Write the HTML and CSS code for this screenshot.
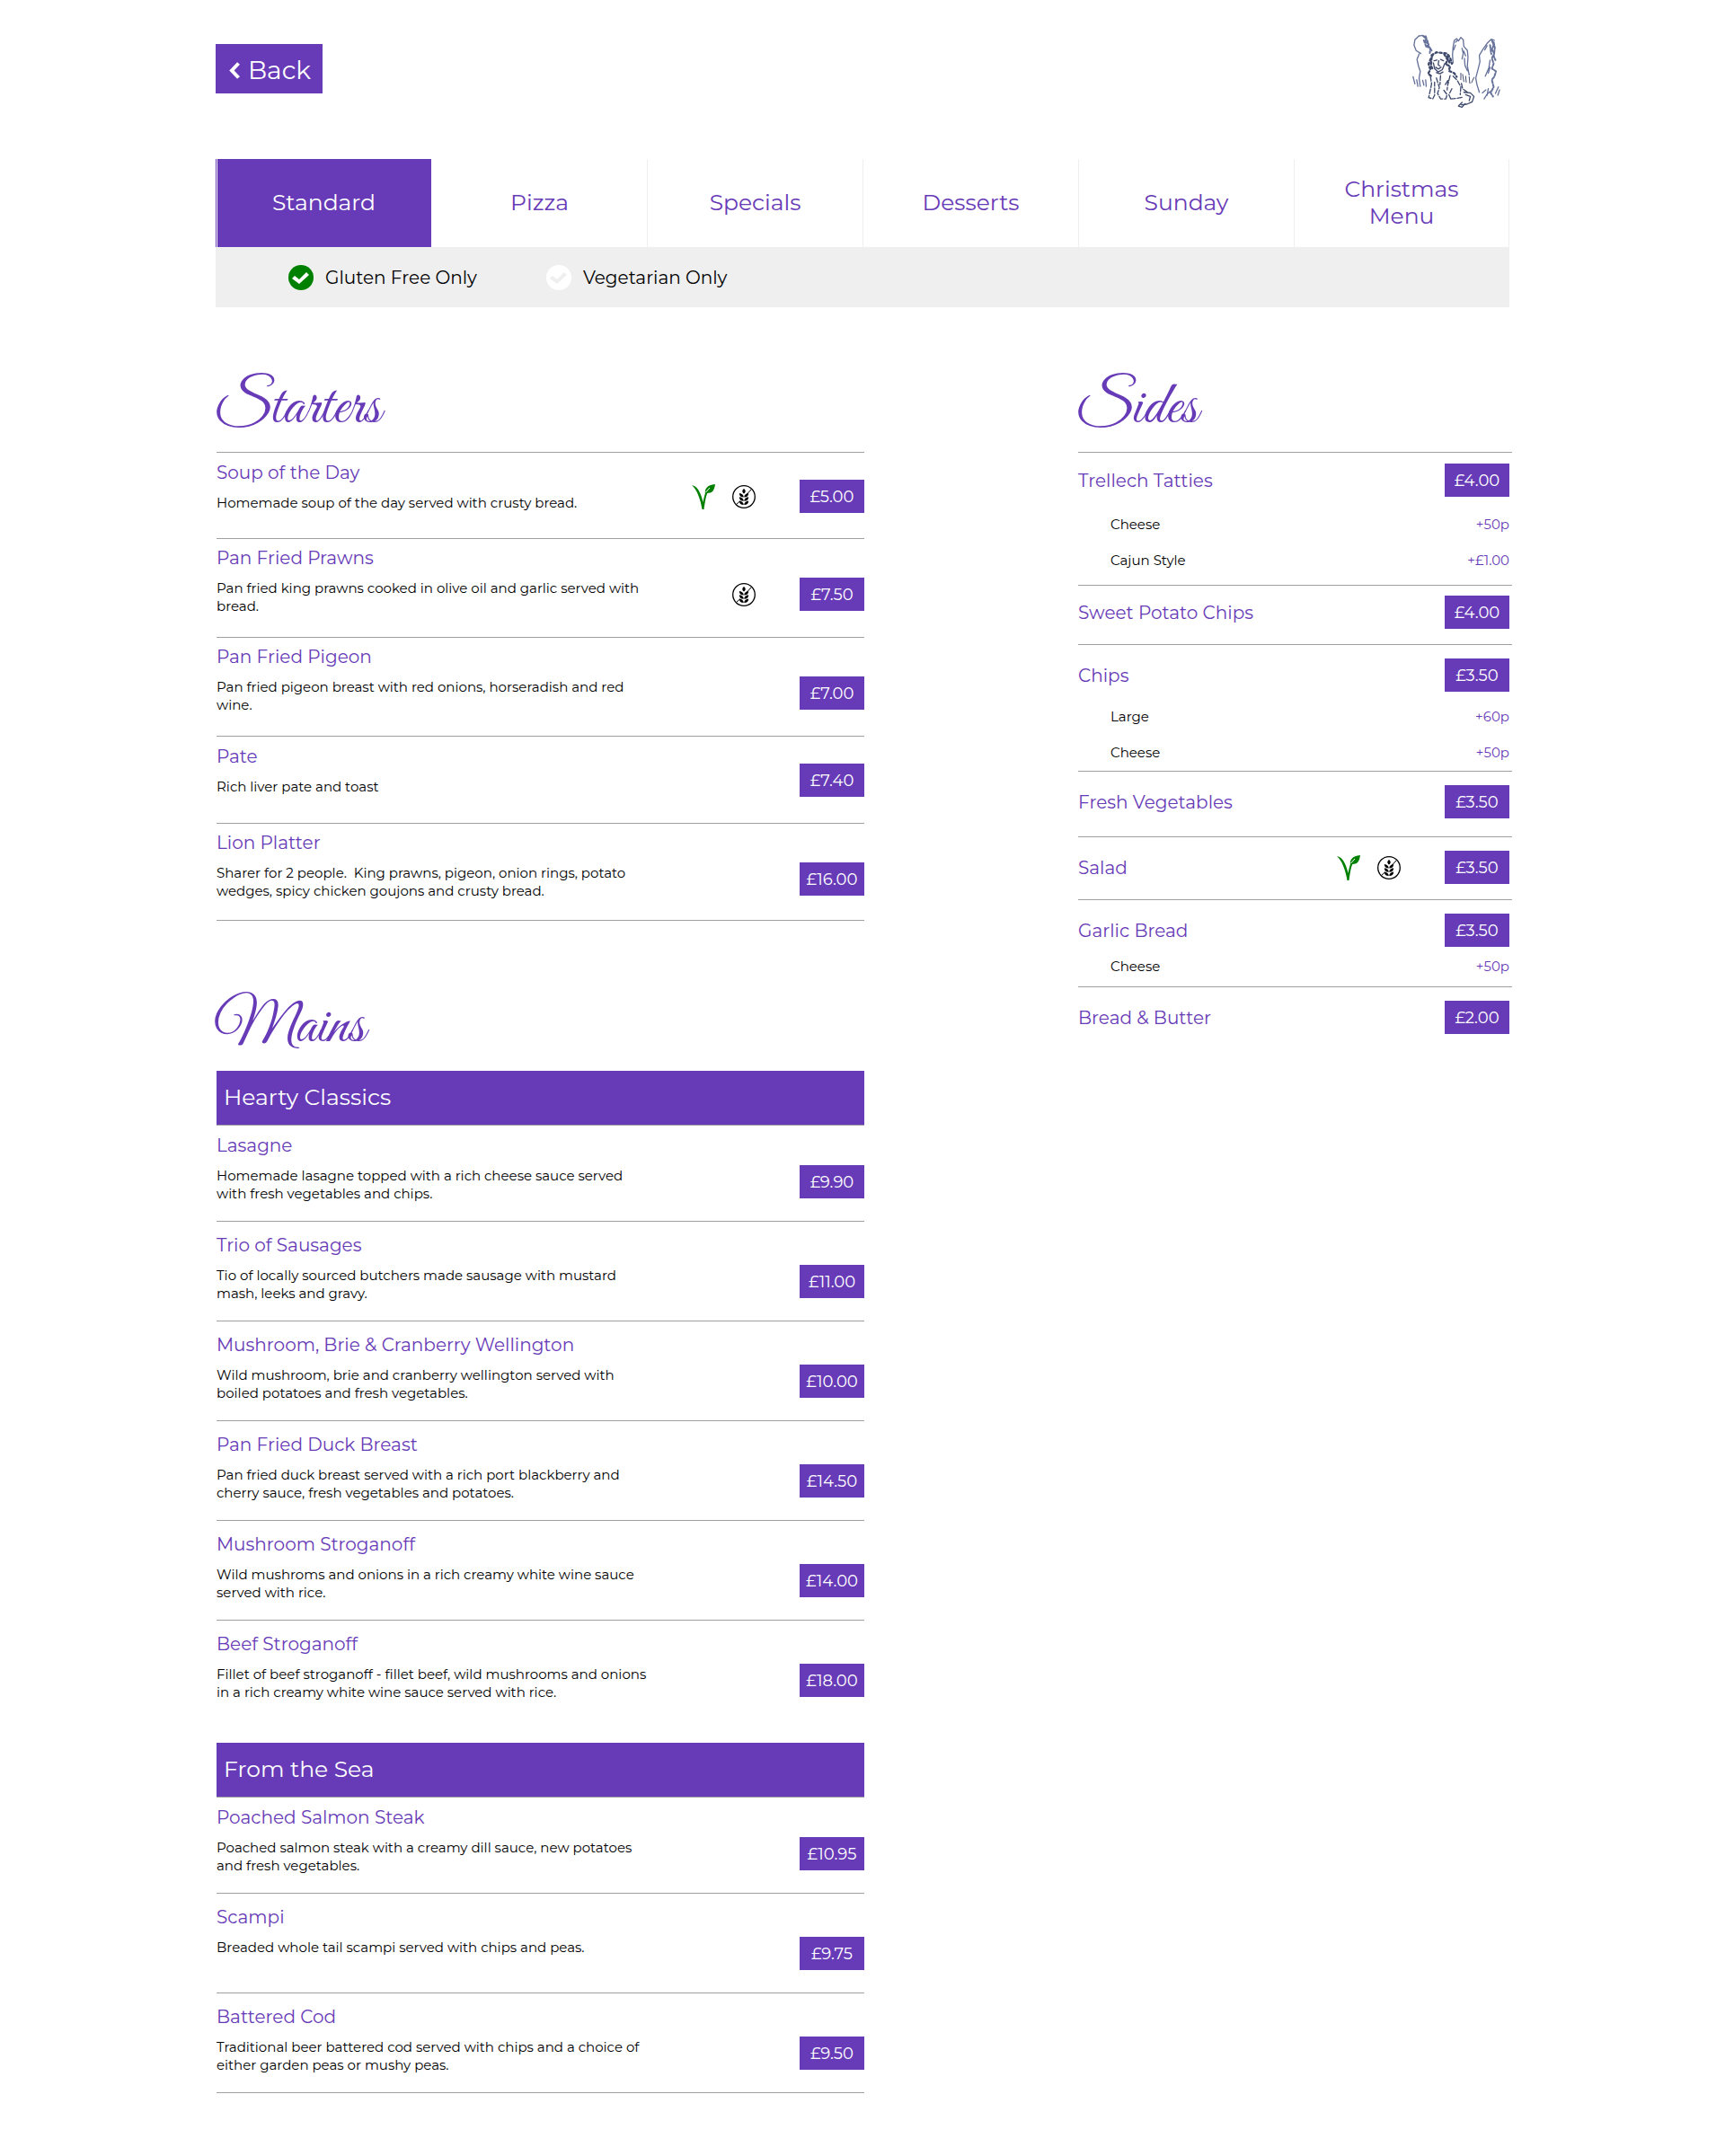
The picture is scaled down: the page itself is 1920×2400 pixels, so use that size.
FILE: index.html
```html
<!DOCTYPE html>
<html lang="en">
<head>
<meta charset="utf-8">
<meta name="viewport" content="width=device-width, initial-scale=1">
<title>Menu</title>
<link rel="stylesheet" href="styles.css">
</head>
<body>
<svg class="sprite" aria-hidden="true">
  <symbol id="veg" viewBox="0 0 26 28">
    <path d="M0 1C6 2 10 9 12.500 20C14 13 15 8 18 5L20 6C16 10 15 18 13.500 28H11.500C10 18 6 6 0 1Z" fill="#008000"/>
    <path d="M26 0C25 7 23 10 17 10L15 11C14 5 17 1 26 0Z" fill="#008000"/>
    <path d="M15.500 9L20 4" stroke="#fff" stroke-width="1"/>
  </symbol>
  <symbol id="gf" viewBox="0 0 26 26">
    <circle cx="13" cy="13" r="12.300" fill="none" stroke="#000" stroke-width="1.300"/>
    <path d="M4.500 21.500L8.500 18M16 10.500L21.500 4.500" stroke="#000" stroke-width="1"/>
    <path d="M13 4C15.500 6 15 8 13 9.500C11 8 10.500 6 13 4Z"/>
    <path d="M7.800 9C11 9.500 12.600 11 12.800 13.500C9.500 13.500 8 12 7.800 9ZM18.200 9C15 9.500 13.400 11 13.200 13.500C16.500 13.500 18 12 18.200 9Z"/>
    <path d="M7.800 13.200C11 13.700 12.600 15.200 12.800 17.700C9.500 17.700 8 16.200 7.800 13.200ZM18.200 13.200C15 13.700 13.400 15.200 13.200 17.700C16.500 17.700 18 16.200 18.200 13.200Z"/>
    <path d="M7.800 17.500C11 18 12.600 19.500 12.800 22C9.500 22 8 20.500 7.800 17.500ZM18.200 17.500C15 18 13.400 19.500 13.200 22C16.500 22 18 20.500 18.200 17.500Z"/>
  </symbol>
</svg>

<div class="page">
  <header class="top">
    <button class="back" type="button">
      <svg class="chevron" viewBox="0 0 12 19" aria-hidden="true"><path d="M10.500 1.500L3 9.500L10.500 17.500" fill="none" stroke="#fff" stroke-width="4"/></svg>
      Back
    </button>
    <svg class="logo" viewBox="90 50 300 250" role="img" aria-label="Lion and standing stones">
      <g fill="none" stroke="#66729a" stroke-width="4" stroke-linecap="round" stroke-linejoin="round">
        <path d="M118 58L104 72L101 90L108 108L124 118M116 60L128 57L140 62M118 120L111 138L116 160L122 178L118 200L122 228M110 206L114 228M98 196L104 220M130 208L134 224M140 206L142 228"/>
        <path d="M132 60L142 68L138 78L148 84L146 96L156 100L154 116M140 60L150 88M134 74L144 100M148 90L160 108" stroke-width="6" stroke-dasharray="8 6"/>
        <path d="M236 74L232 96L230 124L232 150M236 74L244 68L250 76L258 64L266 72L268 94L280 108L282 130L280 160L286 190M262 100L266 118L262 136M268 110L274 126M270 134L272 158L280 176M234 106L240 90M240 80L246 74"/>
        <path d="M358 72L346 84L332 104L320 124L322 146L316 170L308 200L312 222L320 248M360 70L370 74M346 92L338 106M356 140L352 166L340 194M356 164L350 184"/>
        <path d="M362 74L368 90L362 104L370 118L362 134L368 152L362 168L376 178L370 196L362 206L368 230L358 250L366 262M368 80L372 100L368 126L374 140M356 90L360 120" stroke-width="6" stroke-dasharray="9 5"/>
        <path d="M336 270L346 254L358 244M346 258L350 236M374 252L384 230M382 258L388 240M330 250L342 240"/>
      </g>
      <g fill="none" stroke="#3f4a6c" stroke-width="4" stroke-linecap="round" stroke-linejoin="round">
        <path d="M160 124L176 114L196 116L212 118L222 132L228 152M164 122L156 138L150 154L156 172L148 186L160 194M202 120L214 140L206 154L222 160L218 176L236 184L244 196M212 128L220 148M160 132L158 160L166 174" stroke-width="7" stroke-dasharray="7 8"/>
        <path d="M168 142L178 140M190 138L200 142M184 142L182 156L188 160M174 164L182 170L192 164M166 150L170 168L182 180L196 172L204 152M176 182L188 186L198 180"/>
        <path d="M156 194L160 220L154 248L150 266L164 270L170 258L170 214M176 200L186 232L180 252L190 270L208 270L212 256L200 240M190 192L188 222M206 222L216 206L212 240M222 192L214 224M232 194L246 208L258 230L256 256M228 236L218 256L224 270M224 270L246 268L266 264M260 218L264 236L280 248" stroke-dasharray="16 6"/>
        <path d="M268 248L290 250L302 262L296 280L278 288L260 290M274 256L290 262L286 276M262 282L250 294L262 298L272 286"/>
        <path d="M258 206L258 184M268 212L264 188M276 214L274 194M288 218L286 196M294 216L302 198" stroke-width="3"/>
      </g>
    </svg>
  </header>

  <nav class="tabs" aria-label="Menus">
    <a class="tab tab--active" href="#standard" aria-current="page">Standard</a>
    <a class="tab" href="#pizza">Pizza</a>
    <a class="tab" href="#specials">Specials</a>
    <a class="tab" href="#desserts">Desserts</a>
    <a class="tab" href="#sunday">Sunday</a>
    <a class="tab" href="#christmas">Christmas Menu</a>
  </nav>
  <form class="filters">
    <label class="filter"><input class="check" type="checkbox" checked>Gluten Free Only</label>
    <label class="filter"><input class="check" type="checkbox">Vegetarian Only</label>
  </form>

  <main class="columns" id="standard">
    <div class="dishes">
      <section>
        <h2 class="heading">Starters</h2>
        <ul class="list list--starters">
          <li class="dish dish--short">
            <div class="info"><h3 class="name">Soup of the Day</h3><p class="desc">Homemade soup of the day served with crusty bread.</p></div>
            <div class="side"><svg class="veg" role="img" aria-label="Vegetarian"><use href="#veg"/></svg><svg class="gf" role="img" aria-label="Gluten free"><use href="#gf"/></svg><span class="price">£5.00</span></div>
          </li>
          <li class="dish">
            <div class="info"><h3 class="name">Pan Fried Prawns</h3><p class="desc">Pan fried king prawns cooked in olive oil and garlic served with<br>bread.</p></div>
            <div class="side"><svg class="gf" role="img" aria-label="Gluten free"><use href="#gf"/></svg><span class="price">£7.50</span></div>
          </li>
          <li class="dish">
            <div class="info"><h3 class="name">Pan Fried Pigeon</h3><p class="desc">Pan fried pigeon breast with red onions, horseradish and red<br>wine.</p></div>
            <div class="side"><span class="price">£7.00</span></div>
          </li>
          <li class="dish dish--short">
            <div class="info"><h3 class="name">Pate</h3><p class="desc">Rich liver pate and toast</p></div>
            <div class="side"><span class="price">£7.40</span></div>
          </li>
          <li class="dish">
            <div class="info"><h3 class="name">Lion Platter</h3><p class="desc">Sharer for 2 people.&nbsp; King prawns, pigeon, onion rings, potato<br>wedges, spicy chicken goujons and crusty bread.</p></div>
            <div class="side"><span class="price">£16.00</span></div>
          </li>
        </ul>
      </section>

      <section class="mains">
        <h2 class="heading">Mains</h2>
        <h3 class="band">Hearty Classics</h3>
        <ul class="list list--open">
          <li class="dish">
            <div class="info"><h4 class="name">Lasagne</h4><p class="desc">Homemade lasagne topped with a rich cheese sauce served<br>with fresh vegetables and chips.</p></div>
            <div class="side"><span class="price">£9.90</span></div>
          </li>
          <li class="dish">
            <div class="info"><h4 class="name">Trio of Sausages</h4><p class="desc">Tio of locally sourced butchers made sausage with mustard<br>mash, leeks and gravy.</p></div>
            <div class="side"><span class="price">£11.00</span></div>
          </li>
          <li class="dish">
            <div class="info"><h4 class="name">Mushroom, Brie &amp; Cranberry Wellington</h4><p class="desc">Wild mushroom, brie and cranberry wellington served with<br>boiled potatoes and fresh vegetables.</p></div>
            <div class="side"><span class="price">£10.00</span></div>
          </li>
          <li class="dish">
            <div class="info"><h4 class="name">Pan Fried Duck Breast</h4><p class="desc">Pan fried duck breast served with a rich port blackberry and<br>cherry sauce, fresh vegetables and potatoes.</p></div>
            <div class="side"><span class="price">£14.50</span></div>
          </li>
          <li class="dish">
            <div class="info"><h4 class="name">Mushroom Stroganoff</h4><p class="desc">Wild mushroms and onions in a rich creamy white wine sauce<br>served with rice.</p></div>
            <div class="side"><span class="price">£14.00</span></div>
          </li>
          <li class="dish">
            <div class="info"><h4 class="name">Beef Stroganoff</h4><p class="desc">Fillet of beef stroganoff - fillet beef, wild mushrooms and onions<br>in a rich creamy white wine sauce served with rice.</p></div>
            <div class="side"><span class="price">£18.00</span></div>
          </li>
        </ul>
        <h3 class="band">From the Sea</h3>
        <ul class="list">
          <li class="dish">
            <div class="info"><h4 class="name">Poached Salmon Steak</h4><p class="desc">Poached salmon steak with a creamy dill sauce, new potatoes<br>and fresh vegetables.</p></div>
            <div class="side"><span class="price">£10.95</span></div>
          </li>
          <li class="dish">
            <div class="info"><h4 class="name">Scampi</h4><p class="desc">Breaded whole tail scampi served with chips and peas.</p></div>
            <div class="side"><span class="price">£9.75</span></div>
          </li>
          <li class="dish">
            <div class="info"><h4 class="name">Battered Cod</h4><p class="desc">Traditional beer battered cod served with chips and a choice of<br>either garden peas or mushy peas.</p></div>
            <div class="side"><span class="price">£9.50</span></div>
          </li>
        </ul>
      </section>
    </div>

    <section class="sides">
      <h2 class="heading">Sides</h2>
      <ul class="list list--sides">
        <li class="extra extra--loose">
          <div class="line"><h3 class="name">Trellech Tatties</h3><span class="price">£4.00</span></div>
          <dl class="options">
            <div class="option"><dt>Cheese</dt><dd>+50p</dd></div>
            <div class="option"><dt>Cajun Style</dt><dd>+£1.00</dd></div>
          </dl>
        </li>
        <li class="extra extra--high">
          <div class="line"><h3 class="name">Sweet Potato Chips</h3><span class="price">£4.00</span></div>
        </li>
        <li class="extra">
          <div class="line"><h3 class="name">Chips</h3><span class="price">£3.50</span></div>
          <dl class="options">
            <div class="option"><dt>Large</dt><dd>+60p</dd></div>
            <div class="option"><dt>Cheese</dt><dd>+50p</dd></div>
          </dl>
        </li>
        <li class="extra extra--plain">
          <div class="line"><h3 class="name">Fresh Vegetables</h3><span class="price">£3.50</span></div>
        </li>
        <li class="extra extra--short">
          <div class="line"><h3 class="name">Salad</h3><div class="side"><svg class="veg" role="img" aria-label="Vegetarian"><use href="#veg"/></svg><svg class="gf" role="img" aria-label="Gluten free"><use href="#gf"/></svg><span class="price">£3.50</span></div></div>
        </li>
        <li class="extra extra--tight">
          <div class="line"><h3 class="name">Garlic Bread</h3><span class="price">£3.50</span></div>
          <dl class="options">
            <div class="option"><dt>Cheese</dt><dd>+50p</dd></div>
          </dl>
        </li>
        <li class="extra extra--plain">
          <div class="line"><h3 class="name">Bread &amp; Butter</h3><span class="price">£2.00</span></div>
        </li>
      </ul>
    </section>
  </main>
</div>
</body>
</html>
```
FILE: styles.css
```css
:root {
  --purple: #673ab7;
  --rule: #a0a0a0;
  --grey: #efefef;
}

* { box-sizing: border-box; }

body {
  margin: 0;
  background: #fff;
  color: #000;
  font-family: Montserrat, Inter, "Open Sans", sans-serif;
  font-size: 15px;
  line-height: 20px;
}

h2, h3, h4, p, ul, dl, dd { margin: 0; padding: 0; font-weight: 400; }
ul { list-style: none; }

.sprite { position: absolute; width: 0; height: 0; }

.page { width: 75%; margin: 0 auto; padding-bottom: 69px; }

.top {
  display: flex;
  justify-content: space-between;
  align-items: flex-start;
  padding: 37px 10px 57px 0;
}
.back {
  display: flex;
  align-items: center;
  gap: 9px;
  height: 55px;
  margin-top: 12px;
  padding: 3px 13px 0 15px;
  border: 0;
  background: var(--purple);
  color: #fff;
  font: inherit;
  font-size: 28px;
}
.chevron { width: 12px; height: 19px; }
.logo { width: 100px; height: 83px; }

.tabs { display: grid; grid-template-columns: repeat(6, 1fr); }
.tab {
  display: flex;
  align-items: center;
  justify-content: center;
  min-height: 98px;
  padding: 0 40px 2px;
  border-left: 1px solid var(--grey);
  color: var(--purple);
  font-size: 25px;
  line-height: 30px;
  text-align: center;
  text-decoration: none;
}
.tab:last-child { border-right: 1px solid var(--grey); }
.tab--active {
  border-left-color: var(--purple);
  background: var(--purple);
  box-shadow: inset 1px 0 #fff;
  color: #fff;
}
.tab--active + .tab { border-left-color: transparent; }

.filters {
  display: flex;
  gap: 77px;
  padding: 20px 81px 19px;
  background: var(--grey);
}
.filter { display: flex; align-items: center; gap: 13px; font-size: 20px; line-height: 28px; }
.check {
  appearance: none;
  width: 28px;
  height: 28px;
  margin: 0;
  border-radius: 50%;
  background: #fff;
}
.check::before {
  content: "";
  display: block;
  width: 28px;
  height: 28px;
  background: var(--grey);
  clip-path: polygon(4px 15px, 7px 12px, 12px 16px, 20px 8px, 23px 11px, 12px 21px);
}
.check:checked { background: #008000; }
.check:checked::before { background: #fff; }

.columns { display: grid; grid-template-columns: 3fr 2fr; column-gap: calc(100% / 6); padding-top: 68px; }
.dishes { margin: 0 -2px 0 1px; }
.sides { margin-right: -3px; }

.heading {
  height: 93px;
  margin-left: -3px;
  color: var(--purple);
  font-family: "Great Vibes", "Liberation Serif", serif;
  font-size: 68px;
  line-height: 90px;
}
.mains { margin-top: 74px; }

.band {
  height: 60px;
  padding: 14px 8px;
  background: var(--purple);
  color: #fff;
  font-size: 25px;
  line-height: 30px;
}

.dish {
  display: flex;
  justify-content: space-between;
  align-items: flex-start;
  min-height: 111px;
  padding-top: 14px;
  border-bottom: 1px solid var(--rule);
}
.dish:first-child { min-height: 108px; padding-top: 10px; border-top: 1px solid var(--rule); }
.list--open .dish:last-child { min-height: 136px; border-bottom: 0; }
.list--starters .dish { min-height: 110px; padding-top: 9px; }
.list--starters .dish--short { min-height: 97px; padding-top: 10px; }
.list--starters .dish:last-child { min-height: 108px; }

.name { color: var(--purple); font-size: 20px; line-height: 24px; }
.desc { margin-top: 12px; white-space: nowrap; }

.side { display: flex; align-items: center; gap: 19px; }
.dish .side { margin-top: 34px; }
.dish--short .side { margin-top: 20px; }
.veg { width: 26px; height: 28px; }
.gf { width: 26px; height: 26px; margin-right: 30px; }
.price {
  width: 72px;
  height: 37px;
  background: var(--purple);
  color: #fff;
  font-size: 18px;
  line-height: 38px;
  text-align: center;
}

.extra { padding-top: 15px; border-top: 1px solid var(--rule); }
.line { display: flex; justify-content: space-between; align-items: center; padding-right: 3px; }
.extra--loose { padding: 12px 0 7px; }
.extra--high { padding: 11px 0 17px; }
.extra--plain { padding-bottom: 20px; }
.extra--short { padding-bottom: 17px; }
.extra--tight { padding-bottom: 2px; }
.options { padding: 8px 3px 0 36px; }
.extra--loose .options { padding-top: 11px; }
.extra--tight .options { padding-top: 2px; }
.option { display: flex; justify-content: space-between; line-height: 40px; }
.option dd { color: var(--purple); }
```
